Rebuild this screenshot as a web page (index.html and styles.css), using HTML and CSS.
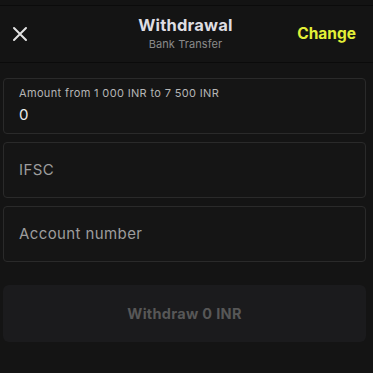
FILE: index.html
```html
<!DOCTYPE html>
<html>
<head>
<meta charset="utf-8">
<link rel="stylesheet" href="styles.css">
</head>
<body>
<div class="page">
  <div class="topstrip"></div>
  <header class="header">
    <button class="close" aria-label="Close">
      <svg width="16" height="16" viewBox="0 0 16 16"><path d="M2 2 L14 14 M14 2 L2 14" stroke="#e2e2e2" stroke-width="2" stroke-linecap="round"/></svg>
    </button>
    <div class="titles">
      <div class="title">Withdrawal</div>
      <div class="subtitle">Bank Transfer</div>
    </div>
    <a class="change">Change</a>
  </header>
  <main class="form">
    <div class="field field-filled">
      <div class="label">Amount from 1 000 INR to 7 500 INR</div>
      <div class="value">0</div>
    </div>
    <div class="field">
      <div class="placeholder">IFSC</div>
    </div>
    <div class="field">
      <div class="placeholder">Account number</div>
    </div>
    <button class="submit">Withdraw 0 INR</button>
  </main>
</div>
</body>
</html>
```
FILE: styles.css
```css
* { box-sizing: border-box; }
html, body { margin: 0; padding: 0; background: #141414; }
body { font-family: Inter, "Noto Sans", sans-serif; color: #e0e0e0; }
.page { width: 373px; height: 373px; overflow: hidden; background: #141414; }
.topstrip { height: 6px; border-bottom: 1px solid #0b0b0b; background: #131313; }
.header {
  height: 57px;
  border-bottom: 1px solid #0b0b0b;
  display: grid;
  grid-template-columns: 1fr auto 1fr;
  align-items: center;
  padding: 0 17px 0 12px;
}
.close { background: none; border: 0; padding: 0; width: 16px; height: 16px; display: flex; }
.titles { display: flex; flex-direction: column; align-items: center; margin-top: -2px; padding-left: 3px; }
.title { font-size: 16.5px; font-weight: 700; color: #dedde2; letter-spacing: 0.2px; line-height: 20px; }
.subtitle { font-size: 11px; color: #8a8a8a; line-height: 14px; margin-top: 2px; letter-spacing: 0.1px; }
.change { justify-self: end; font-size: 15.5px; font-weight: 700; color: #e3f037; line-height: 20px; }
.form { padding: 15px 7px 0 3px; display: flex; flex-direction: column; gap: 8px; }
.field {
  height: 56px;
  border: 1px solid #2a2a2a;
  border-radius: 4px;
  background: #151515;
  padding: 0 15px;
  display: flex;
  flex-direction: column;
  justify-content: center;
}
.field-filled { justify-content: flex-start; padding-top: 7px; }
.label { font-size: 11px; color: #b5b5b5; line-height: 14px; letter-spacing: 0.35px; }
.value { font-size: 15px; color: #ececec; line-height: 20px; margin-top: 5px; }
.placeholder { font-size: 15px; color: #9d9d9d; line-height: 20px; letter-spacing: 0.4px; }
.submit {
  margin-top: 15px;
  height: 57px;
  border: 0;
  border-radius: 6px;
  background: #1b1b1d;
  color: #575757;
  font-family: Inter, "Noto Sans", sans-serif;
  font-size: 14.5px;
  font-weight: 700;
  letter-spacing: 0.3px;
}
```
